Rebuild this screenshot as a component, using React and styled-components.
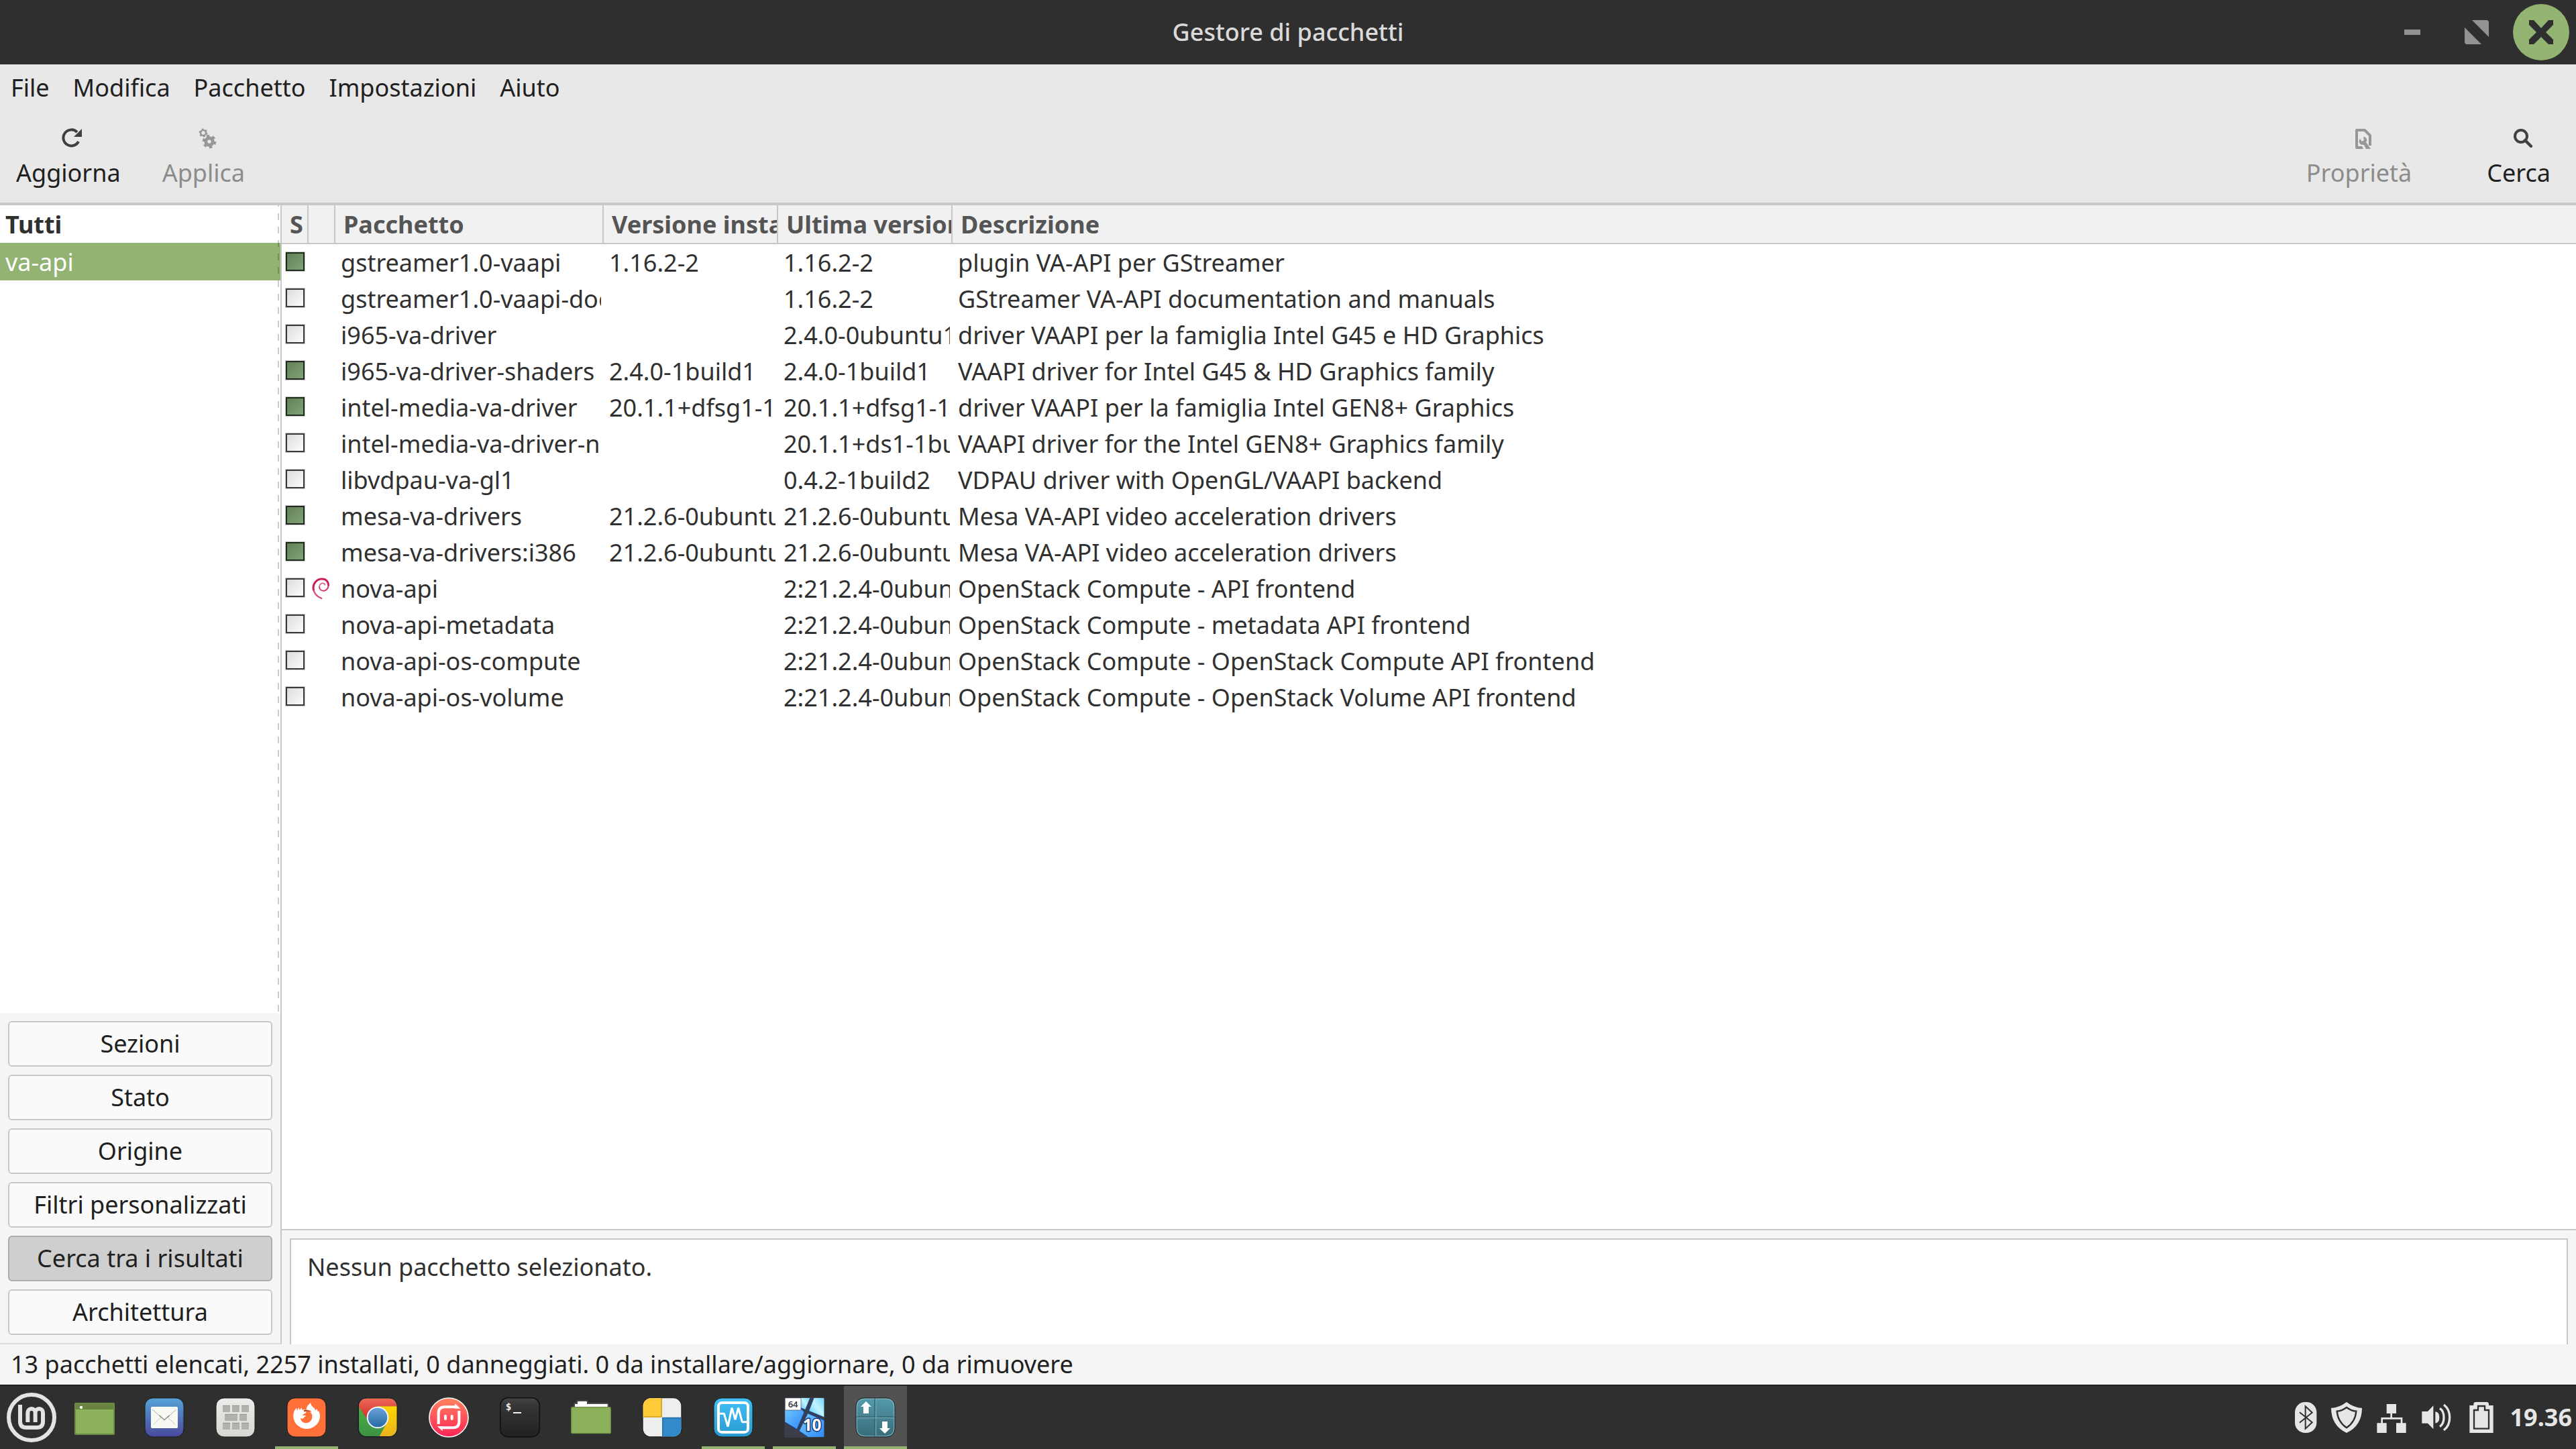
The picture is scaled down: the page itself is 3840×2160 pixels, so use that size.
import React, { useState } from 'react';
import styled, { createGlobalStyle, css } from 'styled-components';

const GlobalStyle = createGlobalStyle`
  * {
    box-sizing: border-box;
  }

  body {
    margin: 0;
    background: #f5f5f5;
    color: #303030;
    font-family: 'Noto Sans', 'Open Sans', sans-serif;
    font-size: 36px;
    line-height: 54px;
  }

  button,
  input {
    margin: 0;
    font: inherit;
    color: inherit;
  }

  svg {
    display: block;
  }
`;

const Desktop = styled.div`
  display: flex;
  flex-direction: column;
  min-height: 100vh;
`;

/* Title bar */

const TitleBar = styled.header`
  display: grid;
  grid-template-columns: 1fr auto 1fr;
  align-items: center;
  height: 96px;
  padding: 0 10px;
  background: #2f2f2f;
`;

const Title = styled.h1`
  grid-column: 2;
  margin: 0;
  color: #dadada;
  font-size: 36px;
  font-weight: 500;
`;

const WindowControls = styled.div`
  display: flex;
  justify-content: flex-end;
  gap: 12px;
`;

const WindowButton = styled.button`
  display: flex;
  align-items: center;
  justify-content: center;
  width: 84px;
  height: 84px;
  padding: 0;
  border: none;
  border-radius: 50%;
  background: ${({ $accent }) => ($accent ? '#92b372' : 'transparent')};
`;

/* Menu and toolbar */

const MenuBar = styled.nav`
  display: flex;
  gap: 3px;
  height: 70px;
  background: #e8e8e8;
`;

const MenuItem = styled.button`
  padding: 0 16px;
  border: none;
  background: transparent;
  color: #202020;
  line-height: 70px;
`;

const Toolbar = styled.div`
  display: flex;
  justify-content: space-between;
  height: 140px;
  border-bottom: 4px solid #c8c8c8;
  background: #e8e8e8;
`;

const ToolGroup = styled.div`
  display: flex;
  gap: ${({ $wide }) => ($wide ? '64px' : '14px')};
  padding-right: ${({ $wide }) => ($wide ? '14px' : '0')};
`;

const ToolButton = styled.button`
  display: flex;
  flex-direction: column;
  align-items: center;
  gap: 12px;
  padding: 24px 24px 0;
  border: none;
  background: transparent;
  color: #202020;
  line-height: 48px;

  svg {
    width: 32px;
    height: 32px;
    margin-left: 12px;
    color: #404040;
  }

  &:disabled {
    color: #8c8c8c;
  }

  &:disabled svg {
    color: #979797;
  }
`;

/* Main area */

const Main = styled.main`
  display: flex;
  flex: 1;
`;

const Sidebar = styled.aside`
  display: flex;
  flex-direction: column;
  width: 420px;
  border-right: 2px solid #c8c8c8;
  border-bottom: 2px solid #dcdcdc;
`;

const FilterList = styled.ul`
  position: relative;
  flex: 1;
  margin: 0;
  padding: 0;
  list-style: none;
  background: #fff;

  &::after {
    content: '';
    position: absolute;
    top: 0;
    right: 2px;
    bottom: 0;
    width: 2px;
    background: repeating-linear-gradient(rgba(0, 0, 0, 0.2) 0 2px, transparent 2px 12px, rgba(0, 0, 0, 0.2) 12px 20px);
  }
`;

const FilterItem = styled.li`
  padding: 2px 8px 0;
  ${({ $bold }) => $bold && 'font-weight: 700;'}
  ${({ $selected }) =>
    $selected &&
    css`
      background: #92b372;
      color: #fff;
    `}
`;

const ViewButtons = styled.div`
  display: flex;
  flex-direction: column;
  gap: 12px;
  padding: 12px;
`;

const ViewButton = styled.button`
  height: 68px;
  padding: 0;
  border: 2px solid ${({ $active }) => ($active ? '#adadad' : '#c8c8c8')};
  border-radius: 6px;
  background: ${({ $active }) => ($active ? '#cfcfcf' : '#fafafa')};
  color: #202020;
  white-space: nowrap;
`;

const Content = styled.section`
  display: flex;
  flex: 1;
  flex-direction: column;
  min-width: 0;
`;

const TableArea = styled.div`
  flex: 1;
  border-bottom: 2px solid #c8c8c8;
  background: #fff;
`;

const PackageTable = styled.table`
  width: 100%;
  table-layout: fixed;
  border-spacing: 0;
  text-align: left;
`;

const Col = styled.col`
  width: ${({ $width }) => $width || 'auto'};
`;

const HeaderCell = styled.th`
  height: 58px;
  padding: 2px 0 0 12px;
  overflow: hidden;
  border-right: 2px solid #c8c8c8;
  border-bottom: 2px solid #c8c8c8;
  background: #f1f1f1;
  color: #555;
  font-weight: 700;
  white-space: nowrap;

  &:last-child {
    border-right: none;
  }
`;

const Cell = styled.td`
  height: 54px;
  padding: 0 4px 0 ${({ $icon }) => ($icon ? '4px' : '8px')};
`;

const CellText = styled.div`
  padding-top: 2px;
  overflow: hidden;
  line-height: 52px;
  white-space: nowrap;
`;

const StatusBox = styled.input`
  display: block;
  width: 28px;
  height: 28px;
  margin: 0 0 2px 2px;
  appearance: none;
  border: 2px solid #3a3a3a;
  outline: 1px solid rgba(0, 0, 0, 0.2);
  background: linear-gradient(135deg, #dcdcdc, #fcfcfc);

  &:checked {
    border-color: #1e2a1c;
    background: linear-gradient(135deg, #648059, #80a375);
  }
`;

const Details = styled.div`
  min-height: 158px;
  margin: 12px 12px 0;
  padding: 14px 24px;
  border: 2px solid #c8c8c8;
  border-bottom: none;
  background: #fff;
`;

const StatusBar = styled.footer`
  height: 60px;
  padding: 0 16px;
  background: #f5f5f5;
  color: #202020;
  line-height: 60px;
`;

/* Desktop panel */

const Panel = styled.div`
  display: flex;
  gap: 10px;
  height: 96px;
  border-top: 2px solid #222;
  background: #2f2f2f;
`;

const Launchers = styled.div`
  display: flex;
  gap: ${({ $spaced }) => ($spaced ? '12px' : '0')};
`;

const Launcher = styled.button`
  display: flex;
  align-items: center;
  justify-content: center;
  width: 94px;
  padding: 0;
  border: none;
  background: ${({ $focused }) => ($focused ? '#525252' : 'transparent')};
  box-shadow: ${({ $running }) => ($running ? 'inset 0 -4px #92b372' : 'none')};

  svg {
    width: ${({ $large }) => ($large ? '74px' : '60px')};
    height: ${({ $large }) => ($large ? '74px' : '60px')};
  }
`;

const Tray = styled.div`
  display: flex;
  align-items: center;
  gap: 19px;
  margin-left: auto;
  padding-right: 6px;
`;

const TrayIcon = styled.svg`
  width: ${({ $narrow }) => ($narrow ? '36px' : '48px')};
  height: 48px;
`;

const Clock = styled.time`
  color: #e6e6e6;
  font-weight: 700;
`;

/* Icons */

const MinimizeIcon = () => (
  <svg width="24" height="8" viewBox="0 0 24 8" fill="#939393">
    <rect width="24" height="8" />
  </svg>
);

const RestoreIcon = () => (
  <svg width="36" height="36" viewBox="0 0 36 36" fill="#939393">
    <path d="M11 0h21a4 4 0 0 1 4 4v21zM0 11l25 25H4a4 4 0 0 1-4-4z" />
  </svg>
);

const CloseIcon = () => (
  <svg width="36" height="36" viewBox="0 0 36 36" fill="#2f2f2f">
    <path d="M0 0h7l11 12L29 0h7v7L25 18l11 11v7h-7L18 25 7 36H0v-7l11-11L0 7z" />
  </svg>
);

const ReloadIcon = () => (
  <svg viewBox="0 0 32 32" fill="none">
    <path d="M25 21A12 12 0 1 1 23 7" stroke="currentColor" strokeWidth="4" />
    <path d="M30 2v12H18z" fill="currentColor" />
  </svg>
);

const GearsIcon = () => (
  <svg viewBox="0 0 32 32" fill="none" stroke="currentColor">
    <circle cx="10" cy="8" r="4" strokeWidth="2.6" />
    <circle cx="10" cy="8" r="5.6" strokeWidth="1.8" strokeDasharray="2.6 3.26" />
    <circle cx="19" cy="21" r="5.2" strokeWidth="5" />
    <circle cx="19" cy="21" r="8.6" strokeWidth="3.4" strokeDasharray="4.4 4.6" />
  </svg>
);

const PropertiesIcon = () => (
  <svg viewBox="0 0 32 32">
    <path d="M6 30V4h12l8 8v15" fill="none" stroke="currentColor" strokeWidth="4" strokeLinejoin="round" />
    <path d="M4 28h10l2 4H6a2 2 0 0 1-2-2z" fill="currentColor" />
    <path d="M11 17c-3 4-1 9 5 9h1l3 6h7l-7-10c3-4 0-8-4-8l1 5-3 2z" fill="currentColor" />
  </svg>
);

const SearchIcon = () => (
  <svg viewBox="0 0 32 32" fill="none" stroke="currentColor" strokeWidth="4">
    <circle cx="13" cy="13" r="9" />
    <path d="M19 19l9 9" strokeLinecap="round" strokeWidth="4.4" />
  </svg>
);

const DebianIcon = () => (
  <svg width="32" height="32" viewBox="148 62 96 96" fill="none" strokeLinecap="round">
    <path d="M194 155C170 146 155 126 157 104" stroke="#d94f80" strokeWidth="7" />
    <path d="M158 116C153 90 172 68 196 68c20 0 29 14 29 28" stroke="#cc1f5a" strokeWidth="9" />
    <path d="M225 94c0 18-11 27-22 27-12 0-19-8-19-18" stroke="#d0346a" strokeWidth="6" />
    <path d="M184 104c0-11 8-17 15-17 6 0 10 3 10 8" stroke="#dc5f8c" strokeWidth="5" />
  </svg>
);

const MintIcon = () => (
  <svg viewBox="30 78 222 222" fill="none" stroke="#e3e3e3">
    <circle cx="141" cy="189" r="102" strokeWidth="18" />
    <path
      d="M90 132V207Q90 234 117 234H165Q192 234 192 207V167A17 17 0 0 0 158 167V210M158 167A17 17 0 0 0 124 167V210"
      strokeWidth="18"
    />
  </svg>
);

const DesktopIcon = () => (
  <svg viewBox="336 93 180 180">
    <rect x="336" y="117" width="180" height="144" rx="5" fill="#6d8b45" />
    <rect x="342" y="123" width="168" height="24" fill="#67833f" />
    <rect x="342" y="147" width="168" height="108" fill="#8bb15b" />
    <circle cx="366" cy="138" r="6.5" fill="#fff" />
  </svg>
);

const Tile = ({ x, y = 96, fill, edge = '#1b1b1b' }) => (
  <rect x={x} y={y} width="174" height="174" rx="36" fill={fill} stroke={edge} strokeWidth="3" />
);

const MailIcon = () => (
  <svg viewBox="645 93 180 180">
    <defs>
      <linearGradient id="mail" x1="0" y1="0" x2="0" y2="1">
        <stop offset="0" stopColor="#57a3d8" />
        <stop offset="1" stopColor="#49489d" />
      </linearGradient>
    </defs>
    <Tile x={648} fill="url(#mail)" />
    <rect x="675" y="135" width="120" height="96" rx="5" fill="#f9f9f4" />
    <path d="M683 148l37 34M787 148l-37 34" stroke="#9b9b93" strokeWidth="2.4" />
    <path d="M687 214l34-33M783 214l-34-33" stroke="#b8b8b0" strokeWidth="2.4" />
    <path d="M712 173l23 21 23-21" fill="none" stroke="#85857e" strokeWidth="4" />
  </svg>
);

const KeyboardIcon = () => (
  <svg viewBox="963 93 180 180">
    <defs>
      <linearGradient id="keyboard" x1="0" y1="0" x2="0" y2="1">
        <stop offset="0" stopColor="#ececea" />
        <stop offset="1" stopColor="#d5d8d0" />
      </linearGradient>
    </defs>
    <Tile x={966} fill="url(#keyboard)" />
    <path
      d="M996 129h33v30h-33zM1038 129h33v30h-33zM1080 129h33v30h-33zM1005 168h57v30h-57zM1071 168h33v30h-33zM996 207h33v30h-33zM1038 207h33v30h-33zM1080 207h33v30h-33z"
      fill="#b1b2ae"
    />
    <path
      d="M996 130h33M1038 130h33M1080 130h33M1005 169h57M1071 169h33M996 208h33M1038 208h33M1080 208h33"
      stroke="#8f908c"
      strokeWidth="2.5"
    />
  </svg>
);

const FirefoxIcon = () => (
  <svg viewBox="21 35 180 180">
    <Tile x={24} y={38} fill="#ff7139" />
    <path
      d="M52 124C51 104 57 90 66 82L69 95 76 79 80 93 88 80 91 92C96 88 103 88 109 92L112 80C115 70 124 64 129 58C130 71 138 76 146 84L151 93 157 86 161 99 165 96C170 105 171 113 171 124A60 60 0 0 1 52 124z"
      fill="#fff"
    />
    <path
      d="M109 92c12-3 21 1 26 12-5-4-9-5-13-4 12 4 16 13 14 25-2 14-12 24-26 25-15 0-25-9-26-22 5 3 9 3 13 0 3-4 6-8 12-8-4-6-11-4-17-4 3-5 8-8 14-10 3-2 5-9 3-14z"
      fill="#ff7139"
    />
    <path d="M97 92q18-6 34 12-14-11-30-4z" fill="#b34d26" />
  </svg>
);

const ChromeIcon = () => (
  <svg viewBox="159 93 180 180">
    <defs>
      <clipPath id="chromeTile">
        <rect x="165" y="98" width="169" height="169" rx="34" />
      </clipPath>
      <linearGradient id="chromeRed" x1="0" y1="0" x2="0" y2="1">
        <stop offset="0" stopColor="#f16a5c" />
        <stop offset="1" stopColor="#cc2f29" />
      </linearGradient>
      <linearGradient id="chromeGreen" x1="0" y1="0" x2="0" y2="1">
        <stop offset="0" stopColor="#4eb748" />
        <stop offset="1" stopColor="#3c9143" />
      </linearGradient>
      <linearGradient id="chromeYellow" x1="0" y1="0" x2="0" y2="1">
        <stop offset="0" stopColor="#ffd500" />
        <stop offset="1" stopColor="#e8b120" />
      </linearGradient>
      <linearGradient id="chromeBlue" x1="0" y1="0" x2="0" y2="1">
        <stop offset="0" stopColor="#6ba3d8" />
        <stop offset="1" stopColor="#2469a5" />
      </linearGradient>
    </defs>
    <Tile x={162} fill="#222" />
    <g clipPath="url(#chromeTile)">
      <rect x="162" y="96" width="174" height="174" fill="url(#chromeGreen)" />
      <path d="M249 133h90v140h-85l38-70z" fill="url(#chromeYellow)" />
      <path d="M160 93h180v40h-91l-48 57-41-62z" fill="url(#chromeRed)" />
    </g>
    <circle cx="249" cy="183" r="46" fill="url(#chromeBlue)" stroke="#f3f6fa" strokeWidth="6" />
  </svg>
);

const MusicBotIcon = () => (
  <svg viewBox="477 93 180 180" fill="none">
    <defs>
      <linearGradient id="bot" x1="0" y1="0" x2="0" y2="1">
        <stop offset="0" stopColor="#ff835f" />
        <stop offset="1" stopColor="#ff2456" />
      </linearGradient>
    </defs>
    <circle cx="567" cy="183" r="87" fill="url(#bot)" stroke="#fff" strokeWidth="5" />
    <path d="M521 213v-49q0-28 28-28h50M613 153v49q0 27-27 27h-50" stroke="#fff" strokeWidth="12" />
    <path d="M595 121l24 22h-24zM539 244l-24-22h24z" fill="#fff" />
    <path d="M552 177v12M581 177v12" stroke="#fff" strokeWidth="12" strokeLinecap="round" />
  </svg>
);

const TerminalIcon = () => (
  <svg viewBox="795 93 180 180">
    <defs>
      <linearGradient id="terminal" x1="0" y1="0" x2="0" y2="1">
        <stop offset="0" stopColor="#484848" />
        <stop offset="0.15" stopColor="#373737" />
        <stop offset="1" stopColor="#212121" />
      </linearGradient>
    </defs>
    <rect x="797" y="95" width="176" height="175" rx="36" fill="url(#terminal)" stroke="#0f0f0f" strokeWidth="5" />
    <text x="821" y="151" fill="#ececec" fontFamily="'DejaVu Sans Mono', monospace" fontSize="43" fontWeight="700">
      $
    </text>
    <rect x="855" y="159" width="36" height="6" fill="#f3f3f3" />
  </svg>
);

const FolderIcon = () => (
  <svg viewBox="1113 93 180 180">
    <path d="M1126 135v-14q0-4 4-4h8v-6q0-5 5-5h42q5 0 5 5v6h87q5 0 5 5v13z" fill="#4a4a4a" />
    <path d="M1131 138v-15h12v-8q0-4 4-4h34q4 0 4 4v8h92v15z" fill="#fff" />
    <rect x="1115" y="137" width="176" height="117" rx="6" fill="#8bb15b" stroke="#6d8b45" strokeWidth="4" />
  </svg>
);

const BlocksIcon = () => (
  <svg viewBox="-9 93 180 180">
    <defs>
      <clipPath id="blocksTile">
        <rect x="-4" y="97" width="170" height="171" rx="35" />
      </clipPath>
    </defs>
    <Tile x={-6} fill="#222" />
    <g clipPath="url(#blocksTile)">
      <rect x="-9" y="93" width="180" height="180" fill="#eeeeee" />
      <rect x="-9" y="93" width="90" height="90" fill="#ffcb38" />
      <path d="M-9 180h87V93" fill="none" stroke="#d0a22a" strokeWidth="5" />
      <rect x="81" y="183" width="90" height="90" fill="#318ac9" />
      <path d="M84 273v-88h87" fill="none" stroke="#2672ab" strokeWidth="5" />
    </g>
  </svg>
);

const MonitorIcon = () => (
  <svg viewBox="309 93 180 180">
    <defs>
      <linearGradient id="monitor" x1="0" y1="0" x2="0" y2="1">
        <stop offset="0" stopColor="#42c0fa" />
        <stop offset="1" stopColor="#289bd0" />
      </linearGradient>
    </defs>
    <Tile x={312} fill="url(#monitor)" />
    <rect x="333" y="117" width="132" height="132" rx="16" fill="none" stroke="#fff" strokeWidth="12" />
    <path
      d="M334 166h24l17 58 18-84 15 52 14-52 17 63h24"
      fill="none"
      stroke="#fff"
      strokeWidth="9"
      strokeLinejoin="bevel"
    />
  </svg>
);

const VirtualBoxIcon = () => (
  <svg viewBox="621 87 190 192">
    <defs>
      <clipPath id="vmTile">
        <rect x="624" y="90" width="186" height="186" rx="4" />
      </clipPath>
      <linearGradient id="vmLight" x1="0" y1="1" x2="1" y2="0">
        <stop offset="0" stopColor="#4fc6fb" />
        <stop offset="0.5" stopColor="#c2f5fd" />
        <stop offset="1" stopColor="#62cdfb" />
      </linearGradient>
      <linearGradient id="vmDeep" x1="0" y1="0" x2="1" y2="1">
        <stop offset="0" stopColor="#77cdff" />
        <stop offset="1" stopColor="#2c86f8" />
      </linearGradient>
    </defs>
    <rect x="621" y="87" width="190" height="192" rx="6" fill="#3b3f4c" />
    <g clipPath="url(#vmTile)" stroke="#123f9c" strokeWidth="3">
      <path d="M690 80h58l-27 66-31-12z" fill="url(#vmLight)" />
      <path d="M765 80h50v104l-78-32z" fill="url(#vmLight)" />
      <path d="M615 130l87 12 14 16-35 82-66-40z" fill="url(#vmDeep)" />
      <path d="M732 163l85 36v84h-75l-51-36z" fill="url(#vmDeep)" />
    </g>
    <rect x="624" y="90" width="76" height="58" rx="3" fill="#fff" stroke="#3b3f4c" strokeWidth="2" />
    <text x="662" y="135" fill="#3b3f4c" fontFamily="'Noto Sans', sans-serif" fontSize="42" fontWeight="600" textAnchor="middle">
      64
    </text>
    <text
      x="753"
      y="248"
      fill="#fff"
      stroke="#14306b"
      strokeWidth="9"
      strokeLinejoin="round"
      paintOrder="stroke"
      fontFamily="'Open Sans', sans-serif"
      fontSize="78"
      fontWeight="700"
      textAnchor="middle"
    >
      10
    </text>
  </svg>
);

const SynapticIcon = () => (
  <svg viewBox="945 93 180 180">
    <defs>
      <linearGradient id="synaptic" x1="0" y1="0" x2="0" y2="1">
        <stop offset="0" stopColor="#549aac" />
        <stop offset="1" stopColor="#386c79" />
      </linearGradient>
    </defs>
    <Tile x={948} fill="url(#synaptic)" />
    <rect x="952" y="100" width="166" height="166" rx="32" fill="none" stroke="#8dbcc8" strokeOpacity="0.7" strokeWidth="4" />
    <path d="M1032 100v166M952 180h166" stroke="#376874" strokeWidth="5" />
    <path d="M1037 100v166M952 185h166" stroke="#6fa5b2" strokeWidth="4" />
    <path d="M993 111l24 24h-12v30h-24v-30h-12zM1077 255l-24-24h12v-30h24v30h12z" fill="#fff" />
  </svg>
);

const BluetoothIcon = () => (
  <TrayIcon $narrow viewBox="88 117 108 144">
    <rect x="94" y="120" width="97" height="138" rx="46" fill="#e6e6e6" />
    <path d="M115 166l56 45-30 28V139l30 28-56 45" fill="none" stroke="#2f2f2f" strokeWidth="6" />
  </TrayIcon>
);

const ShieldIcon = () => (
  <TrayIcon viewBox="252 117 144 144">
    <path d="M324 120q32 25 69 27 0 78-69 111-69-33-69-111 37-2 69-27z" fill="#e6e6e6" />
    <path d="M324 144q21 16 43 17-4 48-43 74-39-26-43-74 22-1 43-17z" fill="#e6e6e6" stroke="#2f2f2f" strokeWidth="7" />
  </TrayIcon>
);

const NetworkIcon = () => (
  <TrayIcon viewBox="452 117 144 144" fill="#e6e6e6">
    <path d="M502 129h43v42h-43zM459 214h43v44h-43zM545 214h44v44h-44z" />
    <path d="M523 168v24M481 218v-25h88v25" fill="none" stroke="#e6e6e6" strokeWidth="8" />
  </TrayIcon>
);

const VolumeIcon = () => (
  <TrayIcon viewBox="650 117 144 144" fill="#e6e6e6">
    <path d="M657 162h26l25-26v105l-25-26h-26z" />
    <path d="M717 163q18 2 18 26t-18 26z" />
    <path d="M737 148q18 12 18 41t-18 41M755 132q26 20 26 57t-26 57" fill="none" stroke="#e6e6e6" strokeWidth="10" />
  </TrayIcon>
);

const BatteryIcon = () => (
  <TrayIcon viewBox="852 117 144 144">
    <path d="M871 135h18v-5q0-10 10-10h48q10 0 10 10v5h20v123H871z" fill="#e6e6e6" />
    <path d="M891 156h18v-18h30v18h18v83h-66z" fill="#e6e6e6" stroke="#2f2f2f" strokeWidth="7" />
    <path d="M900 162h48v68h-48z" fill="#e6e6e6" />
  </TrayIcon>
);

/* Data */

const menus = ['File', 'Modifica', 'Pacchetto', 'Impostazioni', 'Aiuto'];

const views = ['Sezioni', 'Stato', 'Origine', 'Filtri personalizzati', 'Cerca tra i risultati', 'Architettura'];

const packages = [
  { name: 'gstreamer1.0-vaapi', installed: '1.16.2-2', latest: '1.16.2-2', description: 'plugin VA-API per GStreamer' },
  { name: 'gstreamer1.0-vaapi-doc', latest: '1.16.2-2', description: 'GStreamer VA-API documentation and manuals' },
  { name: 'i965-va-driver', latest: '2.4.0-0ubuntu1', description: 'driver VAAPI per la famiglia Intel G45 e HD Graphics' },
  { name: 'i965-va-driver-shaders', installed: '2.4.0-1build1', latest: '2.4.0-1build1', description: 'VAAPI driver for Intel G45 & HD Graphics family' },
  { name: 'intel-media-va-driver', installed: '20.1.1+dfsg1-1', latest: '20.1.1+dfsg1-1', description: 'driver VAAPI per la famiglia Intel GEN8+ Graphics' },
  { name: 'intel-media-va-driver-non-free', latest: '20.1.1+ds1-1build1', description: 'VAAPI driver for the Intel GEN8+ Graphics family' },
  { name: 'libvdpau-va-gl1', latest: '0.4.2-1build2', description: 'VDPAU driver with OpenGL/VAAPI backend' },
  { name: 'mesa-va-drivers', installed: '21.2.6-0ubuntu0.1', latest: '21.2.6-0ubuntu0.1', description: 'Mesa VA-API video acceleration drivers' },
  { name: 'mesa-va-drivers:i386', installed: '21.2.6-0ubuntu0.1', latest: '21.2.6-0ubuntu0.1', description: 'Mesa VA-API video acceleration drivers' },
  { name: 'nova-api', latest: '2:21.2.4-0ubuntu2', description: 'OpenStack Compute - API frontend', supported: true },
  { name: 'nova-api-metadata', latest: '2:21.2.4-0ubuntu2', description: 'OpenStack Compute - metadata API frontend' },
  { name: 'nova-api-os-compute', latest: '2:21.2.4-0ubuntu2', description: 'OpenStack Compute - OpenStack Compute API frontend' },
  { name: 'nova-api-os-volume', latest: '2:21.2.4-0ubuntu2', description: 'OpenStack Compute - OpenStack Volume API frontend' },
];

const shortcuts = [
  { label: 'Menu', Icon: MintIcon, large: true },
  { label: 'Mostra scrivania', Icon: DesktopIcon },
];

const launchers = [
  { label: 'Posta', Icon: MailIcon },
  { label: 'Tastiera', Icon: KeyboardIcon },
  { label: 'Firefox', Icon: FirefoxIcon, running: true },
  { label: 'Chrome', Icon: ChromeIcon },
  { label: 'Musica', Icon: MusicBotIcon },
  { label: 'Terminale', Icon: TerminalIcon },
  { label: 'File', Icon: FolderIcon },
  { label: 'Blocchi', Icon: BlocksIcon },
  { label: 'Monitor di sistema', Icon: MonitorIcon, running: true },
  { label: 'Macchina virtuale', Icon: VirtualBoxIcon, running: true },
  { label: 'Gestore di pacchetti', Icon: SynapticIcon, running: true, focused: true },
];

const PackageRow = ({ pkg }) => (
  <tr>
    <Cell $icon>
      <StatusBox type="checkbox" aria-label={pkg.name} defaultChecked={Boolean(pkg.installed)} />
    </Cell>
    <Cell $icon>{pkg.supported && <DebianIcon />}</Cell>
    <Cell>
      <CellText>{pkg.name}</CellText>
    </Cell>
    <Cell>
      <CellText>{pkg.installed}</CellText>
    </Cell>
    <Cell>
      <CellText>{pkg.latest}</CellText>
    </Cell>
    <Cell>
      <CellText>{pkg.description}</CellText>
    </Cell>
  </tr>
);

const LauncherGroup = ({ items, spaced }) => (
  <Launchers $spaced={spaced}>
    {items.map(({ label, Icon, large, running, focused }) => (
      <Launcher key={label} aria-label={label} $large={large} $running={running} $focused={focused}>
        <Icon />
      </Launcher>
    ))}
  </Launchers>
);

const App = () => {
  const [view, setView] = useState('Cerca tra i risultati');

  return (
    <>
      <GlobalStyle />
      <Desktop>
        <TitleBar>
          <Title>Gestore di pacchetti</Title>
          <WindowControls>
            <WindowButton aria-label="Riduci">
              <MinimizeIcon />
            </WindowButton>
            <WindowButton aria-label="Ripristina">
              <RestoreIcon />
            </WindowButton>
            <WindowButton aria-label="Chiudi" $accent>
              <CloseIcon />
            </WindowButton>
          </WindowControls>
        </TitleBar>

        <MenuBar>
          {menus.map((menu) => (
            <MenuItem key={menu}>{menu}</MenuItem>
          ))}
        </MenuBar>

        <Toolbar>
          <ToolGroup>
            <ToolButton>
              <ReloadIcon />
              Aggiorna
            </ToolButton>
            <ToolButton disabled>
              <GearsIcon />
              Applica
            </ToolButton>
          </ToolGroup>
          <ToolGroup $wide>
            <ToolButton disabled>
              <PropertiesIcon />
              Proprietà
            </ToolButton>
            <ToolButton>
              <SearchIcon />
              Cerca
            </ToolButton>
          </ToolGroup>
        </Toolbar>

        <Main>
          <Sidebar>
            <FilterList>
              <FilterItem $bold>Tutti</FilterItem>
              <FilterItem $selected>va-api</FilterItem>
            </FilterList>
            <ViewButtons>
              {views.map((name) => (
                <ViewButton key={name} $active={name === view} onClick={() => setView(name)}>
                  {name}
                </ViewButton>
              ))}
            </ViewButtons>
          </Sidebar>

          <Content>
            <TableArea>
              <PackageTable>
                <colgroup>
                  <Col $width="40px" />
                  <Col $width="40px" />
                  <Col $width="400px" />
                  <Col $width="260px" />
                  <Col $width="260px" />
                  <Col />
                </colgroup>
                <thead>
                  <tr>
                    <HeaderCell>S</HeaderCell>
                    <HeaderCell />
                    <HeaderCell>Pacchetto</HeaderCell>
                    <HeaderCell>Versione installata</HeaderCell>
                    <HeaderCell>Ultima versione</HeaderCell>
                    <HeaderCell>Descrizione</HeaderCell>
                  </tr>
                </thead>
                <tbody>
                  {packages.map((pkg) => (
                    <PackageRow key={pkg.name} pkg={pkg} />
                  ))}
                </tbody>
              </PackageTable>
            </TableArea>
            <Details>Nessun pacchetto selezionato.</Details>
          </Content>
        </Main>

        <StatusBar>13 pacchetti elencati, 2257 installati, 0 danneggiati. 0 da installare/aggiornare, 0 da rimuovere</StatusBar>

        <Panel>
          <LauncherGroup items={shortcuts} />
          <LauncherGroup items={launchers} spaced />
          <Tray>
            <BluetoothIcon />
            <ShieldIcon />
            <NetworkIcon />
            <VolumeIcon />
            <BatteryIcon />
            <Clock>19.36</Clock>
          </Tray>
        </Panel>
      </Desktop>
    </>
  );
};

export default App;
